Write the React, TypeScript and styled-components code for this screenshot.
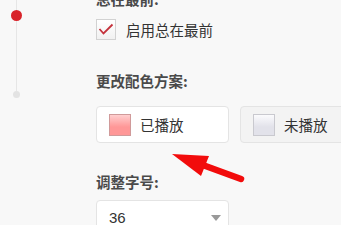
import React from "react";
import styled, { createGlobalStyle } from "styled-components";

const GlobalStyle = createGlobalStyle`
  html, body {
    margin: 0;
    padding: 0;
    background: #f8f8f8;
    overflow: hidden;
  }
  body {
    font-family: "Noto Sans CJK SC", "Liberation Sans", sans-serif;
    color: #333;
  }
`;

const Page = styled.div`
  position: relative;
  width: 341px;
  height: 225px;
  overflow: hidden;
  display: flex;
`;

const Timeline = styled.div`
  width: 32px;
  flex-shrink: 0;
  display: flex;
  flex-direction: column;
  align-items: center;
`;

const Line = styled.div<{ $h: number }>`
  width: 1px;
  height: ${(p) => p.$h}px;
  background: #e6e6e6;
`;

const Dot = styled.div<{ $size: number; $color: string }>`
  width: ${(p) => p.$size}px;
  height: ${(p) => p.$size}px;
  border-radius: 50%;
  background: ${(p) => p.$color};
  flex-shrink: 0;
`;

const Content = styled.div`
  flex-shrink: 0;
  margin-left: 64px;
  margin-top: -11px;
  display: flex;
  flex-direction: column;
`;

const Section = styled.div<{ $gap: number; $after: number }>`
  display: flex;
  flex-direction: column;
  gap: ${(p) => p.$gap}px;
  margin-bottom: ${(p) => p.$after}px;
`;

const Title = styled.div`
  font-size: 14.5px;
  line-height: 20px;
  font-weight: bold;
  color: #4a4a4a;
`;

const CheckRow = styled.label`
  display: flex;
  align-items: center;
  gap: 10px;
  height: 20px;
  font-size: 14.5px;
  color: #333;
`;

const CheckBox = styled.span`
  width: 18px;
  height: 19px;
  border: 1px solid #d2d2d2;
  background: linear-gradient(#ffffff, #f1f1f1);
  display: flex;
  align-items: center;
  justify-content: center;
`;

const ButtonRow = styled.div`
  display: flex;
  gap: 11px;
`;

const SchemeButton = styled.div<{ $active: boolean }>`
  width: 133px;
  height: 37px;
  box-sizing: border-box;
  border: 1px solid #e4e4e4;
  border-radius: 4px;
  background: ${(p) => (p.$active ? "#ffffff" : "#f3f3f3")};
  display: flex;
  align-items: center;
  padding-left: 12px;
  gap: 9px;
  font-size: 14.5px;
  color: #333;
  flex-shrink: 0;
`;

const Swatch = styled.span<{ $top: string; $bottom: string; $border: string }>`
  width: 20px;
  height: 20px;
  border: 1px solid ${(p) => p.$border};
  background: linear-gradient(${(p) => p.$top}, ${(p) => p.$bottom} 60%);
`;

const Select = styled.div`
  width: 133px;
  height: 34px;
  box-sizing: border-box;
  border: 1px solid #e4e4e4;
  border-radius: 4px;
  background: #ffffff;
  display: flex;
  align-items: center;
  justify-content: space-between;
  padding: 0 6px 0 12px;
  font-family: "Liberation Sans", Arial, sans-serif;
  font-size: 15px;
  color: #333;
`;

const Caret = styled.span`
  width: 0;
  height: 0;
  border-left: 5px solid transparent;
  border-right: 5px solid transparent;
  border-top: 6px solid #999;
  margin-right: 1px;
  margin-top: 2px;
`;

const ArrowLayer = styled.svg`
  position: absolute;
  left: 0;
  top: 0;
  pointer-events: none;
`;

const App = () => (
  <>
    <GlobalStyle />
    <Page>
      <Timeline>
        <Line $h={10} />
        <Dot $size={11} $color="#d8232a" />
        <Line $h={70} />
        <Dot $size={7} $color="#e3e3e3" />
      </Timeline>
      <Content>
        <Section $gap={10} $after={32}>
          <Title>总在最前:</Title>
          <CheckRow>
            <CheckBox>
              <svg width="16" height="14" viewBox="0 0 16 14">
                <path
                  d="M1.5 7 L5.5 11.5 L14.5 2.5"
                  fill="none"
                  stroke="#c4313b"
                  strokeWidth="1.8"
                />
              </svg>
            </CheckBox>
            启用总在最前
          </CheckRow>
        </Section>
        <Section $gap={15} $after={29}>
          <Title>更改配色方案:</Title>
          <ButtonRow>
            <SchemeButton $active>
              <Swatch $top="#ffcfcf" $bottom="#ff9797" $border="#d09a9a" />
              已播放
            </SchemeButton>
            <SchemeButton $active={false}>
              <Swatch $top="#fbfbfd" $bottom="#e2e2ea" $border="#c9c9cf" />
              未播放
            </SchemeButton>
          </ButtonRow>
        </Section>
        <Section $gap={8} $after={0}>
          <Title>调整字号:</Title>
          <Select>
            36
            <Caret />
          </Select>
        </Section>
      </Content>
      <ArrowLayer width="341" height="225" viewBox="0 0 341 225">
        <line
          x1="241"
          y1="179"
          x2="200"
          y2="164"
          stroke="#f20c0c"
          strokeWidth="6.5"
          strokeLinecap="round"
        />
        <polygon points="172,154 209,156 201,176" fill="#f20c0c" />
      </ArrowLayer>
    </Page>
  </>
);

export default App;
